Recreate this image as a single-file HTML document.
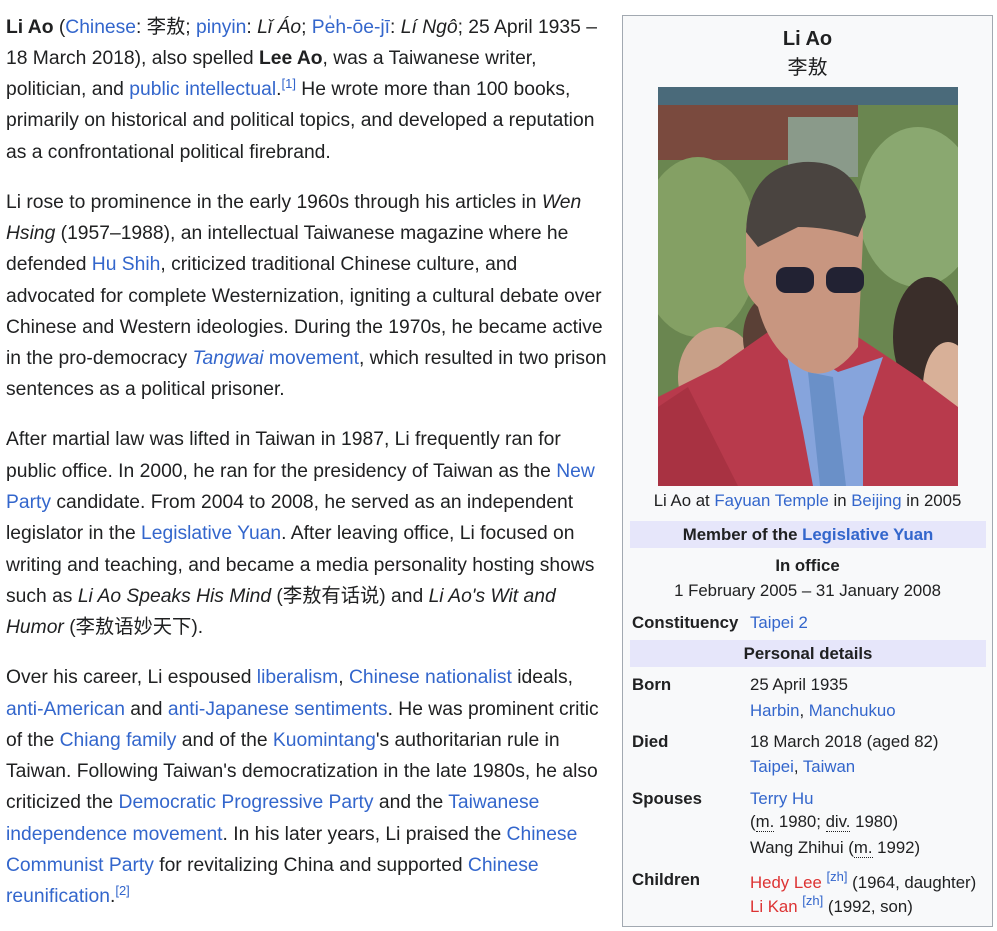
<!DOCTYPE html>
<html><head><meta charset="utf-8"><style>
body{margin:0;background:#fff;font-family:"Liberation Sans","Noto Sans CJK SC",sans-serif;color:#202122;width:997px;height:915px;overflow:hidden;position:relative}
a{color:#3366cc;text-decoration:none}
a.new{color:#d33}
.main{position:absolute;left:6px;top:11.5px;width:610px;font-size:19.3px;line-height:31.3px;white-space:nowrap}
.main p{margin:0 0 18.7px 0}
sup{font-size:13px;line-height:1;vertical-align:7px}
.ib{position:absolute;left:622px;top:15px;width:369px;height:910px;border:1px solid #a2a9b1;background:#f8f9fa;font-size:16.8px;line-height:1.2}
.ib .t{position:absolute;left:0;width:369px;text-align:center}
.hd{position:absolute;left:7px;width:356px;background:#e6e6fa;font-weight:bold;text-align:center;height:27px;line-height:27px}
.l{position:absolute;left:9px;font-weight:bold}
.v{position:absolute;left:127px}
abbr{border-bottom:1px dotted #202122;text-decoration:none}
</style></head><body>
<div class="main">
<p><b>Li Ao</b> (<a>Chinese</a>: 李敖; <a>pinyin</a>: <i>Lǐ Áo</i>; <a>Pe̍h-ōe-jī</a>: <i>Lí Ngô</i>; 25 April 1935 –<br>18 March 2018), also spelled <b>Lee Ao</b>, was a Taiwanese writer,<br>politician, and <a>public intellectual</a>.<sup><a>[1]</a></sup> He wrote more than 100 books,<br>primarily on historical and political topics, and developed a reputation<br>as a confrontational political firebrand.</p>
<p>Li rose to prominence in the early 1960s through his articles in <i>Wen<br>Hsing</i> (1957–1988), an intellectual Taiwanese magazine where he<br>defended <a>Hu Shih</a>, criticized traditional Chinese culture, and<br>advocated for complete Westernization, igniting a cultural debate over<br>Chinese and Western ideologies. During the 1970s, he became active<br>in the pro-democracy <a><i>Tangwai</i> movement</a>, which resulted in two prison<br>sentences as a political prisoner.</p>
<p>After martial law was lifted in Taiwan in 1987, Li frequently ran for<br>public office. In 2000, he ran for the presidency of Taiwan as the <a>New<br>Party</a> candidate. From 2004 to 2008, he served as an independent<br>legislator in the <a>Legislative Yuan</a>. After leaving office, Li focused on<br>writing and teaching, and became a media personality hosting shows<br>such as <i>Li Ao Speaks His Mind</i> (李敖有话说) and <i>Li Ao's Wit and<br>Humor</i> (李敖语妙天下).</p>
<p>Over his career, Li espoused <a>liberalism</a>, <a>Chinese nationalist</a> ideals,<br><a>anti-American</a> and <a>anti-Japanese sentiments</a>. He was prominent critic<br>of the <a>Chiang family</a> and of the <a>Kuomintang</a>'s authoritarian rule in<br>Taiwan. Following Taiwan's democratization in the late 1980s, he also<br>criticized the <a>Democratic Progressive Party</a> and the <a>Taiwanese<br>independence movement</a>. In his later years, Li praised the <a>Chinese<br>Communist Party</a> for revitalizing China and supported <a>Chinese<br>reunification</a>.<sup><a>[2]</a></sup></p>
</div>
<div class="ib">
<div class="t" style="top:11px;font-size:20px;font-weight:bold">Li Ao</div>
<div class="t" style="top:40px;font-size:20px">李敖</div>
<svg style="position:absolute;left:35px;top:71px" width="300" height="399" viewBox="0 0 300 399">
<rect width="300" height="399" fill="#6a8650"/>
<rect width="300" height="18" fill="#4a6a7a"/>
<rect y="18" width="200" height="55" fill="#7a4a3e"/>
<rect x="130" y="30" width="70" height="60" fill="#8a9a8a"/>
<ellipse cx="40" cy="160" rx="60" ry="90" fill="#84a064"/>
<ellipse cx="260" cy="120" rx="60" ry="80" fill="#8aa870"/>
<ellipse cx="60" cy="290" rx="40" ry="50" fill="#c8a088"/>
<ellipse cx="270" cy="250" rx="35" ry="60" fill="#3a2e2a"/>
<ellipse cx="290" cy="300" rx="25" ry="45" fill="#d8b098"/>
<ellipse cx="110" cy="250" rx="25" ry="40" fill="#5a4036"/>
<path d="M0 310 L60 280 L110 245 L200 250 L260 290 L300 320 L300 399 L0 399 Z" fill="#b83a4c"/>
<path d="M125 250 L145 345 L155 399 L205 399 L205 330 L225 270 L180 285 Z" fill="#86a4dc"/>
<path d="M150 285 L175 290 L188 399 L162 399 Z" fill="#6a90c8"/>
<path d="M88 140 Q95 95 155 98 Q205 100 205 150 L200 260 Q170 300 140 280 Q110 260 100 220 Q80 200 88 180 Z" fill="#c89680"/>
<path d="M88 145 Q90 80 145 75 Q200 72 208 130 L200 150 Q170 140 140 140 L100 160 Z" fill="#4a4440"/>
<rect x="118" y="180" width="38" height="26" rx="10" fill="#223" /><rect x="168" y="180" width="38" height="26" rx="10" fill="#223"/>
<path d="M0 399 L0 320 L30 300 L80 399 Z" fill="#a83242"/>
</svg>
<div class="t" style="top:475px">Li Ao at <a>Fayuan Temple</a> in <a>Beijing</a> in 2005</div>
<div class="hd" style="top:505px">Member of the <a>Legislative Yuan</a></div>
<div class="t" style="top:540px;font-weight:bold">In office</div>
<div class="t" style="top:565px">1 February 2005 – 31 January 2008</div>
<div class="l" style="top:597px">Constituency</div><div class="v" style="top:597px"><a>Taipei 2</a></div>
<div class="hd" style="top:624px">Personal details</div>
<div class="l" style="top:659px">Born</div><div class="v" style="top:659px">25 April 1935</div>
<div class="v" style="top:685px"><a>Harbin</a>, <a>Manchukuo</a></div>
<div class="l" style="top:716px">Died</div><div class="v" style="top:716px">18 March 2018 (aged 82)</div>
<div class="v" style="top:741px"><a>Taipei</a>, <a>Taiwan</a></div>
<div class="l" style="top:773px">Spouses</div><div class="v" style="top:773px"><a>Terry Hu</a></div>
<div class="v" style="top:796px">(<abbr>m.</abbr> 1980; <abbr>div.</abbr> 1980)</div>
<div class="v" style="top:822px">Wang Zhihui (<abbr>m.</abbr> 1992)</div>
<div class="l" style="top:854px">Children</div><div class="v" style="top:854px"><a class="new">Hedy Lee</a> <sup><a>[zh]</a></sup> (1964, daughter)</div>
<div class="v" style="top:878px"><a class="new">Li Kan</a> <sup><a>[zh]</a></sup> (1992, son)</div>
</div>
</body></html>
